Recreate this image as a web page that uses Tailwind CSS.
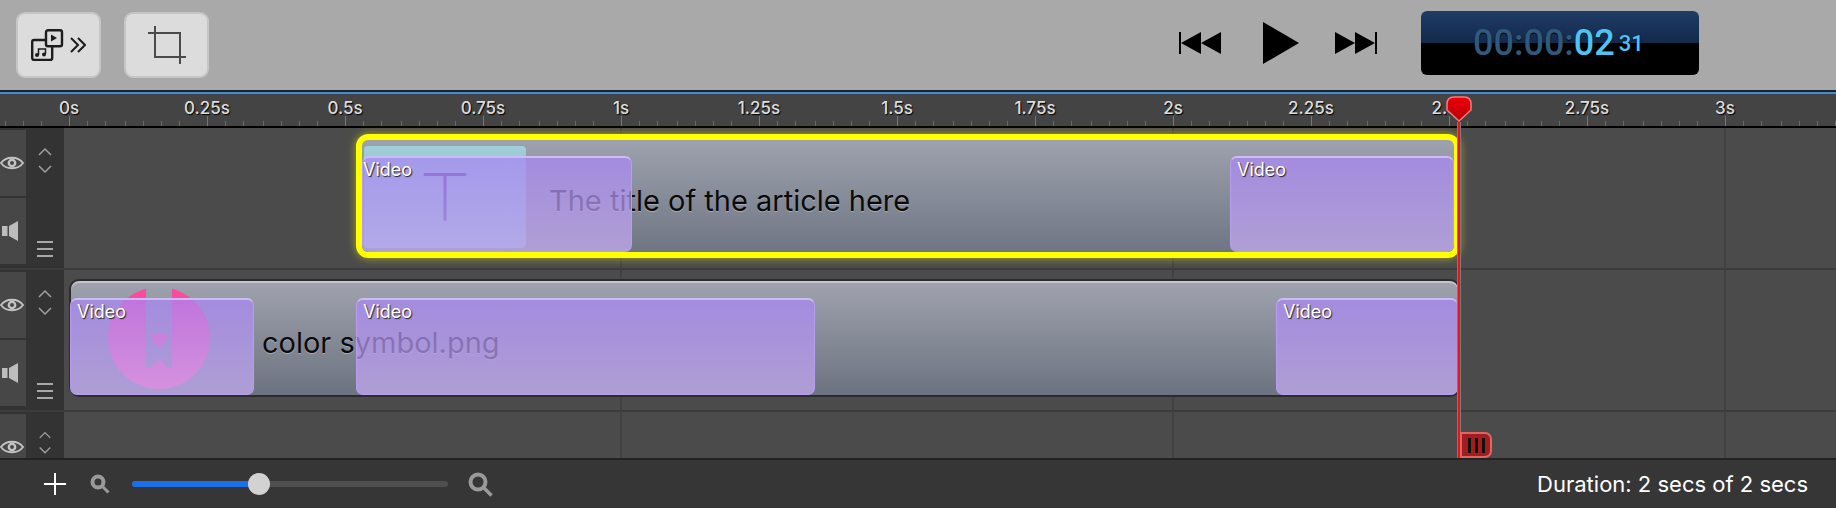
<!DOCTYPE html>
<html>
<head>
    <title>Timeline</title>
    <script src="https://cdn.jsdelivr.net/npm/@tailwindcss/browser@4"></script>
</head>
<body class="bg-[#363636]">
<div class="w-[1836px] h-[508px] overflow-hidden flex flex-col font-['Inter',sans-serif]">

    <!-- toolbar -->
    <div class="h-[90px] shrink-0 bg-[#a9a9a9] flex items-center pl-[16px]">
        <button class="w-[85px] h-[66px] rounded-[9px] bg-[#dcdcdc] border-2 border-[#c6c6c6] flex items-center justify-center">
            <svg width="55" height="32" viewBox="0 0 55 32" fill="none" stroke="#1c1c1c">
                <rect x="1.200" y="11" width="20" height="20" rx="2" stroke-width="2.400"/>
                <rect x="15" y="1.200" width="16" height="16" rx="2" stroke-width="2.400" fill="#dcdcdc"/>
                <path d="M20 5.500l6 3.500-6 3.500z" fill="#1c1c1c" stroke="none"/>
                <path d="M7.500 26v-6h7v5" stroke-width="1.500"/>
                <circle cx="6" cy="26" r="2" fill="#1c1c1c" stroke="none"/>
                <circle cx="13" cy="25.500" r="2" fill="#1c1c1c" stroke="none"/>
                <path d="M40 9l7 7-7 7M47 9l7 7-7 7" stroke-width="2"/>
            </svg>
        </button>
        <button class="ml-[23px] w-[85px] h-[66px] rounded-[9px] bg-[#dcdcdc] border-2 border-[#c6c6c6] flex items-center justify-center">
            <svg width="38" height="38" viewBox="0 0 38 38" fill="none" stroke="#4a4a4a" stroke-width="2">
                <path d="M0 7h32v31M7 0v31h31"/>
            </svg>
        </button>
        <div class="flex items-center mb-[4px]">
            <svg class="ml-[970px]" width="42" height="22" viewBox="0 0 42 22"><rect width="2" height="22"/><path d="M2 11L22 0v22zM22 11L42 0v22z"/></svg>
            <svg class="ml-[42px]" width="36" height="42" viewBox="0 0 36 42"><path d="M0 0l36 21L0 42z"/></svg>
            <svg class="ml-[36px]" width="42" height="22" viewBox="0 0 42 22"><rect x="40" width="2" height="22"/><path d="M0 0l20 11L0 22zM20 0l20 11-20 11z"/></svg>
            <div class="ml-[44px] w-[278px] h-[64px] rounded-[6px] bg-[linear-gradient(#203c66_0,#12294a_50%,#000_50%)] flex items-center pl-[52px] font-['Roboto',sans-serif] font-medium [text-shadow:0_1px_1px_#000]">
                <span class="text-[36px] text-[#2f5a7c]">00:00:</span><span class="text-[36px] text-[#4cc4f5]">02</span><span class="ml-[4px] text-[22px] text-[#4cc4f5]">31</span>
            </div>
        </div>
    </div>
    <div class="h-[4px] shrink-0 bg-[#232323] border-b-2 border-[#3a8fd8]"></div>

    <!-- ruler -->
    <div class="h-[34px] shrink-0 bg-[#444444] border-b-2 border-black relative flex text-[#dddddd] text-[17px] leading-[24px] font-medium [text-shadow:1px_1px_1px_#000]">
        <svg class="absolute inset-0" width="1836" height="32">
            <defs>
                <pattern id="ticks" x="69" width="138" height="32" patternUnits="userSpaceOnUse">
                    <path d="M0.500 22v10" stroke="#777" fill="none"/>
                    <path d="M18.500 27v5M36.500 27v5M56.500 27v5M74.500 27v5M92.500 27v5M110.500 27v5" stroke="#6a6a6a" fill="none"/>
                </pattern>
            </defs>
            <rect width="1836" height="32" fill="url(#ticks)"/>
        </svg>
        <div class="w-[138px] pt-[2px] text-center">0s</div>
        <div class="w-[138px] pt-[2px] text-center">0.25s</div>
        <div class="w-[138px] pt-[2px] text-center">0.5s</div>
        <div class="w-[138px] pt-[2px] text-center">0.75s</div>
        <div class="w-[138px] pt-[2px] text-center">1s</div>
        <div class="w-[138px] pt-[2px] text-center">1.25s</div>
        <div class="w-[138px] pt-[2px] text-center">1.5s</div>
        <div class="w-[138px] pt-[2px] text-center">1.75s</div>
        <div class="w-[138px] pt-[2px] text-center">2s</div>
        <div class="w-[138px] pt-[2px] text-center">2.25s</div>
        <div class="w-[138px] pt-[2px] text-center">2.5s</div>
        <div class="w-[138px] pt-[2px] text-center">2.75s</div>
        <div class="w-[138px] pt-[2px] text-center">3s</div>
    </div>

    <!-- tracks -->
    <div class="h-[330px] shrink-0 relative bg-[#4b4b4b]">
        <div class="absolute top-0 bottom-0 left-[620px] w-[2px] bg-[#424242]"></div>
        <div class="absolute top-0 bottom-0 left-[1172px] w-[2px] bg-[#424242]"></div>
        <div class="absolute top-0 bottom-0 left-[1724px] w-[2px] bg-[#424242]"></div>

        <!-- track 1 -->
        <div class="relative h-[142px] border-b-2 border-[#3c3c3c] flex">
            <div class="w-[64px] shrink-0 bg-[#333333] flex">
                <div class="w-[26px] flex flex-col gap-[2px] py-[2px]">
                    <div class="h-[66px] bg-[#474747] flex items-center">
                        <svg width="24" height="16" viewBox="0 0 24 16" fill="none" stroke="#c4c4c4"><path d="M1 8C6 1 18 1 23 8C18 15 6 15 1 8z" stroke-width="1.800"/><circle cx="12" cy="8" r="3.200" stroke-width="2.400"/></svg>
                    </div>
                    <div class="h-[66px] bg-[#474747] flex items-center pl-[2px]">
                        <svg width="16" height="20" viewBox="0 0 16 20" fill="#bdbdbd"><rect y="5" width="5.500" height="10"/><path d="M7 5l9-5v20l-9-5z"/></svg>
                    </div>
                </div>
                <div class="w-[38px] flex flex-col items-center pt-[18px]">
                    <svg width="14" height="32" viewBox="0 0 14 32" fill="none" stroke="#a0a0a0" stroke-width="1.500"><path d="M1 9l6-6 6 6M1 20l6 6 6-6"/></svg>
                    <div class="mt-[63px] w-[16px] flex flex-col gap-[5px]">
                        <div class="h-[2px] bg-[#a8a8a8]"></div><div class="h-[2px] bg-[#a8a8a8]"></div><div class="h-[2px] bg-[#a8a8a8]"></div>
                    </div>
                </div>
            </div>
            <div class="flex-1 pl-[292px] pt-[6px]">
                <div class="relative w-[1104px] h-[124px] rounded-[12px] border-[6px] border-[#ffff00] shadow-[0_0_8px_#ffff0088] bg-linear-to-b from-[#9ea2ae] to-[#6f7683] flex items-center pl-[187px] pt-[10px] text-[29px] text-[#0a0a0a] [text-shadow:0_1px_0_#ffffff55]">
                    The title of the article here
                    <div class="absolute left-[2px] top-[6px] w-[162px] h-[102px] rounded-[4px] bg-linear-to-b from-[#a0d0d8] to-[#7ba0c4] flex justify-center pt-[27px]">
                        <svg width="44" height="48" viewBox="0 0 44 48" fill="none" stroke="#4a3a94" stroke-width="3" stroke-linecap="round"><path d="M2 1.500h40M22 1.500v45"/></svg>
                    </div>
                    <div class="absolute left-0 top-[16px] w-[270px] h-[96px] rounded-[7px] border border-[#b79ef0] border-t-2 border-t-[#cdbcf2] bg-linear-to-b from-[#a986f4b8] to-[#c8aef5b8] text-[18px] leading-none text-white [text-shadow:1px_1px_1px_#222] pt-[3px]">Video</div>
                    <div class="absolute left-[868px] right-0 top-[16px] h-[96px] rounded-[7px] border border-[#b79ef0] border-t-2 border-t-[#cdbcf2] bg-linear-to-b from-[#a986f4b8] to-[#c8aef5b8] text-[18px] leading-none text-white [text-shadow:1px_1px_1px_#222] pt-[3px] pl-[6px]">Video</div>
                </div>
            </div>
        </div>

        <!-- track 2 -->
        <div class="relative h-[142px] border-b-2 border-[#3c3c3c] flex">
            <div class="w-[64px] shrink-0 bg-[#333333] flex">
                <div class="w-[26px] flex flex-col gap-[2px] py-[2px]">
                    <div class="h-[66px] bg-[#474747] flex items-center">
                        <svg width="24" height="16" viewBox="0 0 24 16" fill="none" stroke="#c4c4c4"><path d="M1 8C6 1 18 1 23 8C18 15 6 15 1 8z" stroke-width="1.800"/><circle cx="12" cy="8" r="3.200" stroke-width="2.400"/></svg>
                    </div>
                    <div class="h-[66px] bg-[#474747] flex items-center pl-[2px]">
                        <svg width="16" height="20" viewBox="0 0 16 20" fill="#bdbdbd"><rect y="5" width="5.500" height="10"/><path d="M7 5l9-5v20l-9-5z"/></svg>
                    </div>
                </div>
                <div class="w-[38px] flex flex-col items-center pt-[18px]">
                    <svg width="14" height="32" viewBox="0 0 14 32" fill="none" stroke="#a0a0a0" stroke-width="1.500"><path d="M1 9l6-6 6 6M1 20l6 6 6-6"/></svg>
                    <div class="mt-[63px] w-[16px] flex flex-col gap-[5px]">
                        <div class="h-[2px] bg-[#a8a8a8]"></div><div class="h-[2px] bg-[#a8a8a8]"></div><div class="h-[2px] bg-[#a8a8a8]"></div>
                    </div>
                </div>
            </div>
            <div class="flex-1 pl-[5px] pt-[9px]">
                <div class="relative w-[1391px] h-[118px] rounded-[10px] border-2 border-[#2c2c2c] shadow-[inset_0_2px_0_#c4c6cc] bg-linear-to-b from-[#a0a3ae] to-[#6c7380] flex items-center pl-[191px] pt-[10px] text-[29px] text-[#0a0a0a] [text-shadow:0_1px_0_#ffffff55]">
                    color symbol.png
                    <svg class="absolute left-[37px] top-[6px]" width="102" height="102" viewBox="0 0 102 102">
                        <defs>
                            <mask id="bookmark">
                                <rect width="102" height="102" fill="#fff"/>
                                <path fill="#000" d="M38 0v78q0 3 3 3 1.500 0 3-2l7-8 7 8q1.500 2 3 2 3 0 3-3V0z"/>
                            </mask>
                        </defs>
                        <circle cx="51" cy="51" r="51" fill="#fb4aa0" mask="url(#bookmark)"/>
                        <path fill="#fb4aa0" d="M51 61l-7.500-8a4.700 4.700 0 0 1 7.500-5.500 4.700 4.700 0 0 1 7.500 5.500z"/>
                    </svg>
                    <div class="absolute -left-px top-[17px] w-[184px] h-[97px] rounded-[7px] border border-[#b79ef0] border-t-2 border-t-[#cdbcf2] bg-linear-to-b from-[#a986f4b8] to-[#c8aef5b8] text-[18px] leading-none text-white [text-shadow:1px_1px_1px_#222] pt-[3px] pl-[6px]">Video</div>
                    <div class="absolute left-[285px] top-[17px] w-[459px] h-[97px] rounded-[7px] border border-[#b79ef0] border-t-2 border-t-[#cdbcf2] bg-linear-to-b from-[#a986f4b8] to-[#c8aef5b8] text-[18px] leading-none text-white [text-shadow:1px_1px_1px_#222] pt-[3px] pl-[6px]">Video</div>
                    <div class="absolute left-[1205px] right-0 top-[17px] h-[97px] rounded-[7px] border border-[#b79ef0] border-t-2 border-t-[#cdbcf2] bg-linear-to-b from-[#a986f4b8] to-[#c8aef5b8] text-[18px] leading-none text-white [text-shadow:1px_1px_1px_#222] pt-[3px] pl-[6px]">Video</div>
                </div>
            </div>
        </div>

        <!-- track 3 -->
        <div class="relative h-[46px] overflow-hidden flex">
            <div class="w-[64px] shrink-0 bg-[#333333] flex">
                <div class="w-[26px] flex flex-col py-[2px]">
                    <div class="h-[66px] shrink-0 bg-[#474747] flex items-center">
                        <svg width="24" height="16" viewBox="0 0 24 16" fill="none" stroke="#c4c4c4"><path d="M1 8C6 1 18 1 23 8C18 15 6 15 1 8z" stroke-width="1.800"/><circle cx="12" cy="8" r="3.200" stroke-width="2.400"/></svg>
                    </div>
                </div>
                <div class="w-[38px] flex flex-col items-center pt-[18px]">
                    <svg width="14" height="32" viewBox="0 0 14 32" fill="none" stroke="#a0a0a0" stroke-width="1.500"><path d="M1 9l6-6 6 6M1 20l6 6 6-6"/></svg>
                </div>
            </div>
        </div>

        <!-- playhead -->
        <div class="absolute top-[-6px] bottom-0 left-[1457px] w-[4px] bg-[#7c7c7c] flex justify-center">
            <div class="w-[2px] bg-[#e8141c]"></div>
        </div>
        <svg class="absolute top-[-32px] left-[1446px]" width="26" height="26" viewBox="0 0 26 26">
            <defs>
                <linearGradient id="headFill" x1="0" y1="0" x2="0" y2="1">
                    <stop offset="0" stop-color="#ee0008"/>
                    <stop offset="1" stop-color="#b80006"/>
                </linearGradient>
            </defs>
            <path d="M8 1h10q7 0 7 7v6L13 25 1 14V8q0-7 7-7z" fill="url(#headFill)" stroke="#f47c7c" stroke-width="1.500"/>
        </svg>
        <div class="absolute left-[1460px] bottom-0 w-[32px] h-[26px] rounded-r-[7px] border-2 border-[#df6464] bg-[#a01e1e] flex items-center justify-center gap-[4px]">
            <div class="w-[3px] h-[15px] bg-[#111111]"></div><div class="w-[3px] h-[15px] bg-[#111111]"></div><div class="w-[3px] h-[15px] bg-[#111111]"></div>
        </div>
    </div>

    <!-- footer -->
    <div class="flex-1 border-t-2 border-[#232323] bg-[#363636] flex items-center pl-[44px] pr-[28px]">
        <svg width="22" height="22" viewBox="0 0 22 22" stroke="#ffffff" stroke-width="2"><path d="M0 11h22M11 0v22"/></svg>
        <svg class="ml-[24px]" width="20" height="20" viewBox="0 0 20 20" fill="none" stroke="#9a9a9a"><circle cx="8" cy="8" r="5.500" stroke-width="4"/><path d="M12.500 12.500l6 6" stroke-width="3"/></svg>
        <div class="ml-[22px] w-[316px] h-[6px] rounded-full bg-[#4f4f4f] relative">
            <div class="w-[127px] h-[6px] rounded-l-full bg-[#1a6ee8]"></div>
            <div class="absolute left-[116px] top-[-8px] w-[22px] h-[22px] rounded-full bg-[#d2d2d2]"></div>
        </div>
        <svg class="ml-[20px]" width="25" height="25" viewBox="0 0 25 25" fill="none" stroke="#9a9a9a"><circle cx="10" cy="10" r="7.500" stroke-width="4"/><path d="M15.500 15.500l8 8" stroke-width="3.500"/></svg>
        <div class="ml-auto text-[22px] text-white">Duration: 2 secs of 2 secs</div>
    </div>
</div>
</body>
</html>
